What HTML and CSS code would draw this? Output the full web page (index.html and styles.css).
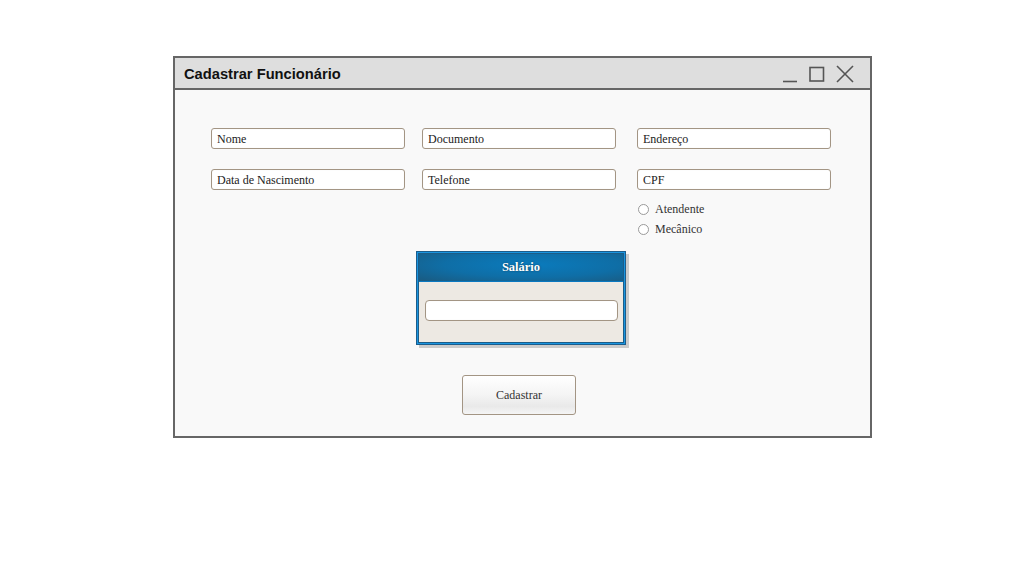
FILE: index.html
```html
<!DOCTYPE html>
<html>
<head>
<meta charset="utf-8">
<link rel="stylesheet" href="styles.css">
</head>
<body>
<div class="page">
  <div class="window">
    <div class="titlebar">
      <span class="title">Cadastrar Funcionário</span>
      <div class="controls">
        <svg width="80" height="22" viewBox="0 0 80 22">
          <line x1="8" y1="18.5" x2="22" y2="18.5" stroke="#555" stroke-width="1.6"/>
          <rect x="35" y="4.5" width="13.5" height="13.5" fill="none" stroke="#555" stroke-width="1.6"/>
          <line x1="62" y1="3" x2="78" y2="19" stroke="#555" stroke-width="1.6"/>
          <line x1="78" y1="3" x2="62" y2="19" stroke="#555" stroke-width="1.6"/>
        </svg>
      </div>
    </div>
    <div class="content">
      <div class="grid">
        <div class="field">Nome</div>
        <div class="field">Documento</div>
        <div class="field third">Endereço</div>
        <div class="field">Data de Nascimento</div>
        <div class="field">Telefone</div>
        <div class="third">
          <div class="field">CPF</div>
          <div class="radios">
            <label class="radio"><span class="dot"></span>Atendente</label>
            <label class="radio"><span class="dot"></span>Mecânico</label>
          </div>
        </div>
      </div>
      <div class="panel">
        <div class="panel-inner">
          <div class="panel-head">Salário</div>
          <div class="panel-body">
            <div class="field empty"></div>
          </div>
        </div>
      </div>
      <div class="button">Cadastrar</div>
    </div>
  </div>
</div>
</body>
</html>
```
FILE: styles.css
```css
html, body {
  margin: 0;
  padding: 0;
  background: #ffffff;
}
.page {
  padding-top: 56px;
  padding-left: 173px;
}
.window {
  width: 695px;
  border: 2px solid #666666;
  background: #f9f9f9;
}
.titlebar {
  height: 30px;
  background: #dedede;
  border-bottom: 2px solid #666666;
  display: flex;
  align-items: center;
  justify-content: space-between;
}
.title {
  font-family: "Liberation Sans", Arial, sans-serif;
  font-weight: bold;
  font-size: 14.7px;
  color: #111;
  padding-left: 9px;
  padding-top: 1px;
}
.controls {
  display: flex;
  padding-right: 15px;
  padding-top: 1px;
}
.controls svg { display: block; }
.content {
  padding: 38px 0 21px 36px;
}
.grid {
  display: grid;
  grid-template-columns: 194px 194px 198px;
  column-gap: 17px;
  row-gap: 20px;
  align-items: start;
}
.third {
  margin-left: 4px;
}
.field {
  box-sizing: border-box;
  height: 21px;
  border: 1px solid #a39584;
  border-radius: 3px;
  background: #ffffff;
  font-family: "Liberation Serif", "Times New Roman", "DejaVu Serif", serif;
  font-size: 12px;
  color: #222;
  line-height: 20px;
  padding-left: 5px;
  box-shadow: inset 0 0 1px rgba(0,0,0,0.08);
}
.radios {
  display: flex;
  flex-direction: column;
  gap: 8px;
  padding-top: 13px;
}
.radio {
  display: flex;
  align-items: center;
  font-family: "Liberation Serif", "Times New Roman", "DejaVu Serif", serif;
  font-size: 12px;
  color: #333;
  height: 12px;
}
.dot {
  box-sizing: border-box;
  width: 11px;
  height: 11px;
  border: 1px solid #9a9a9a;
  border-radius: 50%;
  background: #fff;
  margin-left: 1px;
  margin-right: 6px;
}
.panel {
  box-sizing: border-box;
  width: 210px;
  height: 94px;
  margin-top: 16px;
  margin-left: 205px;
  border: 1px solid #1b5d8c;
  background: #1a95e0;
  padding: 1px;
  box-shadow: 3px 3px 0 #cbcbcb;
}
.panel-inner {
  box-sizing: border-box;
  height: 100%;
  border: 1px solid #1c5d88;
  background: #ede9e3;
  display: flex;
  flex-direction: column;
}
.panel-head {
  height: 27px;
  background: radial-gradient(ellipse at 55% 40%, #0a7bbd 0%, #0f6ea6 55%, #1a5a80 100%);
  border-bottom: 1px solid #0a78c0;
  color: #ffffff;
  font-family: "Liberation Serif", "Times New Roman", "DejaVu Serif", serif;
  font-weight: bold;
  font-size: 12.5px;
  text-align: center;
  line-height: 26px;
  text-shadow: 0 0 2px rgba(0,0,0,0.5);
}
.panel-body {
  padding: 18px 5px 0 6px;
}
.panel-body .field {
  height: 21px;
  border-color: #a39584;
  border-radius: 4px;
}
.button {
  box-sizing: border-box;
  width: 114px;
  height: 40px;
  margin-top: 30px;
  margin-left: 251px;
  border: 1px solid #a39584;
  border-radius: 3px;
  background: linear-gradient(to bottom, #ffffff 0%, #f4f4f4 50%, #e9e9e9 80%, #f5f5f5 100%);
  font-family: "Liberation Serif", "Times New Roman", "DejaVu Serif", serif;
  font-size: 12px;
  color: #333;
  text-align: center;
  line-height: 38px;
}
```
